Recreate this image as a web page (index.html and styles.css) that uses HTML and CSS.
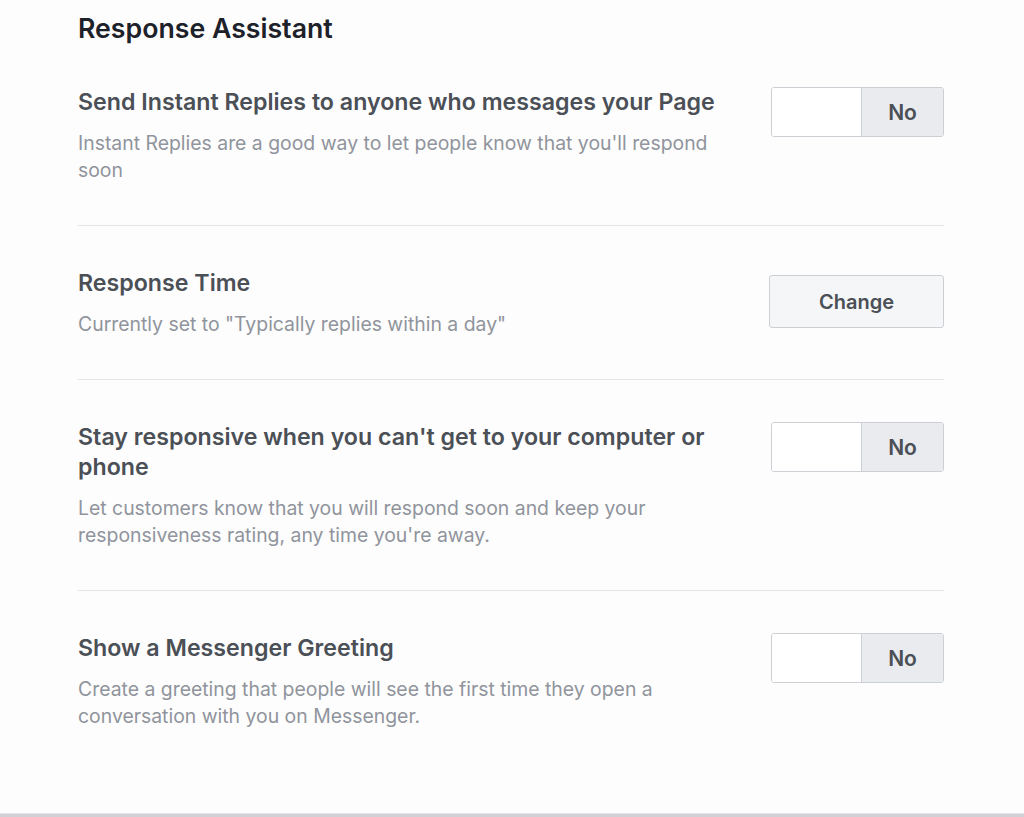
FILE: index.html
```html
<!DOCTYPE html>
<html lang="en">
<head>
    <meta charset="UTF-8">
    <meta name="viewport" content="width=device-width, initial-scale=1.0">
    <title>Response Assistant</title>
    <link rel="stylesheet" href="styles.css">
</head>
<body>
    <div class="page">
        <h2 class="page-title">Response Assistant</h2>

        <div class="setting">
            <div class="setting-text">
                <div class="setting-title">Send Instant Replies to anyone who messages your Page</div>
                <div class="setting-desc">Instant Replies are a good way to let people know that you'll respond soon</div>
            </div>
            <div class="toggle">
                <span class="toggle-off"></span>
                <span class="toggle-label">No</span>
            </div>
        </div>

        <div class="setting">
            <div class="setting-text">
                <div class="setting-title">Response Time</div>
                <div class="setting-desc">Currently set to "Typically replies within a day"</div>
            </div>
            <button class="change-btn">Change</button>
        </div>

        <div class="setting">
            <div class="setting-text">
                <div class="setting-title">Stay responsive when you can't get to your computer or phone</div>
                <div class="setting-desc">Let customers know that you will respond soon and keep your responsiveness rating, any time you're away.</div>
            </div>
            <div class="toggle">
                <span class="toggle-off"></span>
                <span class="toggle-label">No</span>
            </div>
        </div>

        <div class="setting">
            <div class="setting-text">
                <div class="setting-title">Show a Messenger Greeting</div>
                <div class="setting-desc">Create a greeting that people will see the first time they open a conversation with you on Messenger.</div>
            </div>
            <div class="toggle">
                <span class="toggle-off"></span>
                <span class="toggle-label">No</span>
            </div>
        </div>
    </div>
    <div class="footer-bar"></div>
</body>
</html>
```

FILE: styles.css
```css
body {
    margin: 0;
    font-family: Inter, "Liberation Sans", Arial, sans-serif;
    background-color: #fdfdfd;
    height: 817px;
    display: flex;
    flex-direction: column;
}
.page {
    flex: 1;
    padding: 12px 80px 0 78px;
}
.page-title {
    margin: 0;
    font-size: 26.7px;
    line-height: 32px;
    font-weight: 600;
    color: #1d2129;
}
.setting {
    display: flex;
    justify-content: space-between;
    align-items: flex-start;
    padding: 42px 0 41px;
    border-bottom: 1px solid #e5e5e5;
}
.setting:first-of-type {
    padding-top: 43px;
}
.setting:last-child {
    border-bottom: none;
}
.setting-text {
    width: 662px;
}
.setting-title {
    font-size: 23.2px;
    line-height: 30px;
    font-weight: 600;
    color: #4b4f56;
}
.setting-desc {
    margin-top: 13px;
    font-size: 19.4px;
    line-height: 27px;
    color: #90949c;
    padding-right: 20px;
}
.toggle {
    display: flex;
    width: 171px;
    height: 48px;
    border: 1px solid #ccd0d5;
    border-radius: 3px;
    overflow: hidden;
}
.toggle-off {
    width: 89px;
    background-color: #fff;
    border-right: 1px solid #ccd0d5;
}
.toggle-label {
    flex: 1;
    display: flex;
    align-items: center;
    justify-content: center;
    background-color: #e9ebee;
    font-size: 21px;
    font-weight: 600;
    color: #4b4f56;
}
.change-btn {
    margin-top: 7px;
    width: 175px;
    height: 53px;
    background-color: #f5f6f7;
    border: 1px solid #ccd0d5;
    border-radius: 3px;
    font-family: inherit;
    font-size: 20px;
    font-weight: 600;
    color: #4b4f56;
}
.footer-bar {
    height: 3px;
    background-color: #d0d1d5;
    border-top: 1px solid #e4e5e7;
}
```
